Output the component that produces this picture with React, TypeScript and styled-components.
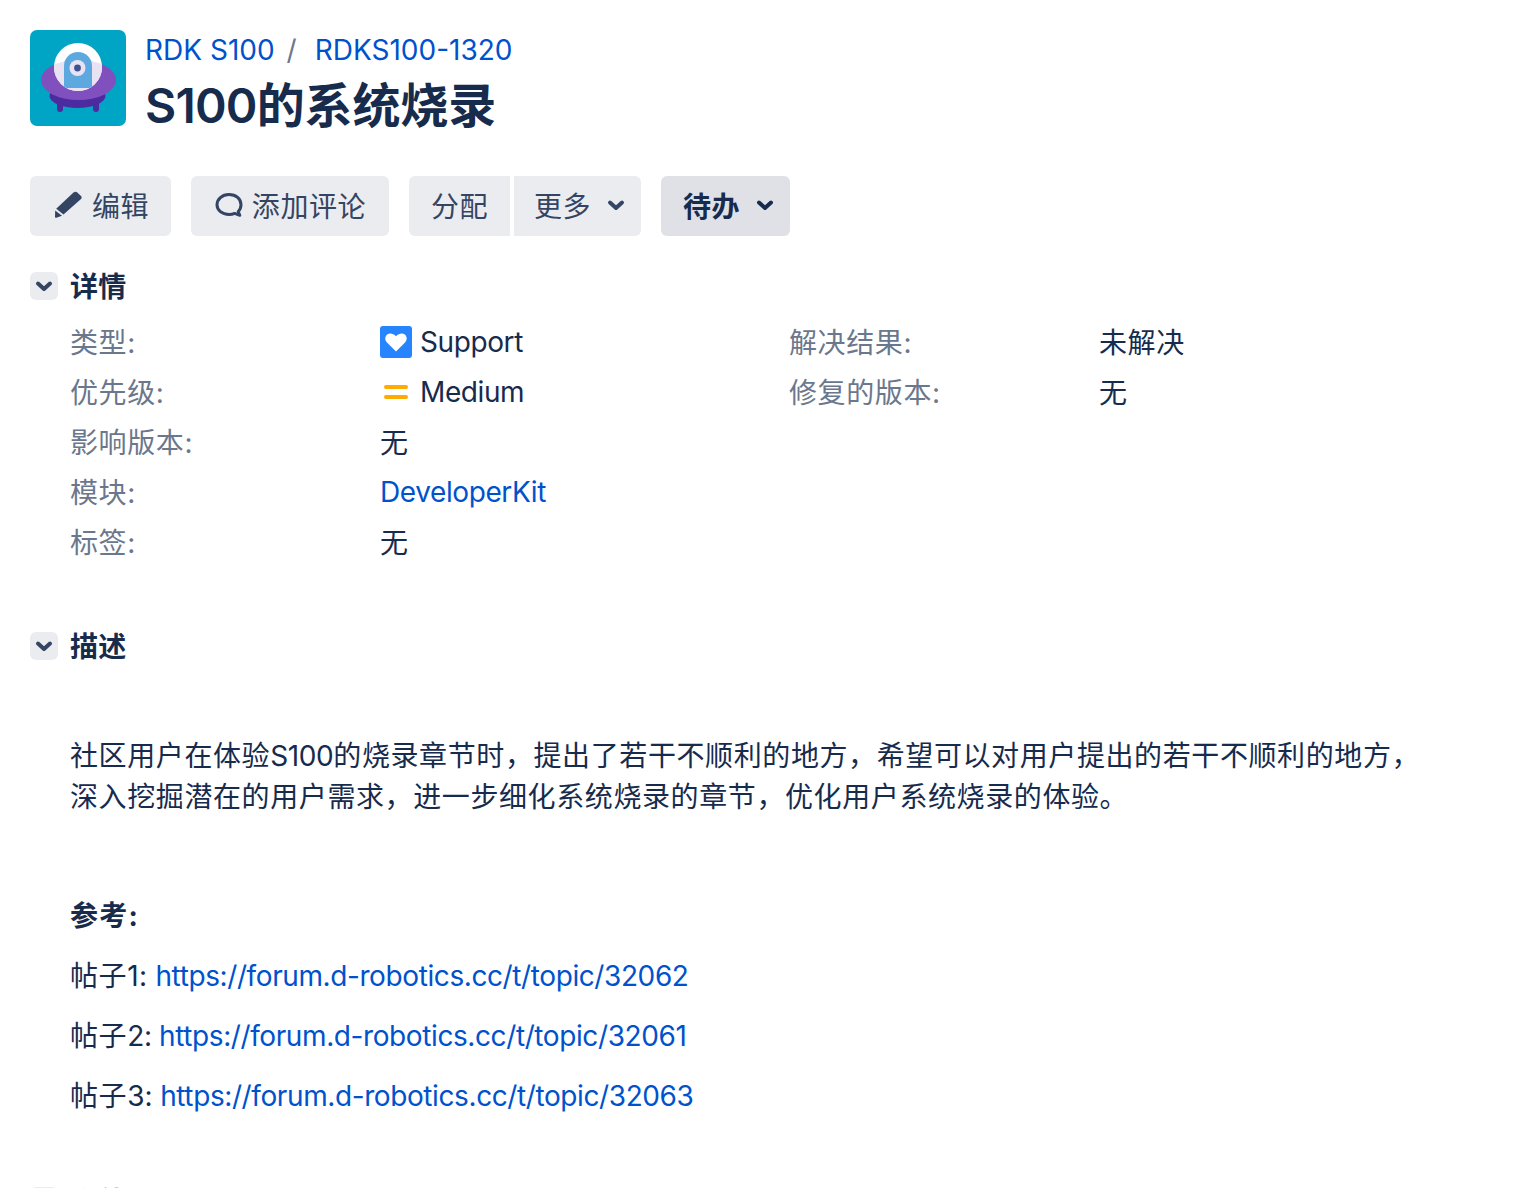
import React from 'react';
import styled, { createGlobalStyle } from 'styled-components';

const Global = createGlobalStyle`
  html, body { margin: 0; padding: 0; background: #fff; height: 1188px; overflow: hidden; }
  body { font-family: Inter, "Noto Sans CJK SC", sans-serif; color: #172b4d; font-size: 28px; letter-spacing: 0.6px; }
  a { color: #0052cc; text-decoration: none; letter-spacing: -0.4px; }
`;

const Lat = styled.span`
  letter-spacing: -0.4px;
`;
const PostNum = styled.span<{ $ls: number }>`
  letter-spacing: ${p => p.$ls}px;
`;
const Page = styled.div`
  display: flex;
  flex-direction: column;
  padding: 30px 30px 0;
`;
const Header = styled.header`
  display: flex;
  gap: 19px;
  height: 96px;
`;
const Avatar = styled.svg`
  width: 96px;
  height: 96px;
  flex: none;
  display: block;
`;
const HeadText = styled.div`
  display: flex;
  flex-direction: column;
`;
const Crumbs = styled.div`
  display: flex;
  align-items: center;
  height: 40px;
  line-height: 40px;
  white-space: nowrap;
  a { letter-spacing: 0; }
`;
const Slash = styled.span`
  color: #6b778c;
  margin: 0 18px 0 12px;
  letter-spacing: 0;
`;
const Title = styled.h1`
  margin: 8px 0 0;
  font-size: 48px;
  line-height: 56px;
  font-weight: 600;
  color: #172b4d;
  white-space: nowrap;
  letter-spacing: -0.1px;
`;
const TitleLat = styled.span`
  letter-spacing: -0.8px;
`;
const Toolbar = styled.div`
  display: flex;
  margin-top: 50px;
  height: 60px;
`;
const Button = styled.div<{ $w: number; $ml?: number; $side?: 'l' | 'r'; $status?: boolean; $pad?: number; $gap?: number }>`
  display: flex;
  align-items: center;
  justify-content: ${p => (p.$pad ? 'flex-start' : 'center')};
  padding-left: ${p => p.$pad ?? 0}px;
  padding-bottom: 2px;
  box-sizing: border-box;
  gap: ${p => p.$gap ?? 13}px;
  width: ${p => p.$w}px;
  margin-left: ${p => p.$ml ?? 0}px;
  background: ${p => (p.$status ? '#dfe1e6' : '#ebecf0')};
  color: ${p => (p.$status ? '#172b4d' : '#344563')};
  font-weight: ${p => (p.$status ? 600 : 400)};
  border-radius: ${p => (p.$side === 'l' ? '6px 0 0 6px' : p.$side === 'r' ? '0 6px 6px 0' : '6px')};
`;
const Section = styled.section<{ $top: number }>`
  margin-top: ${p => p.$top}px;
`;
const SectionHead = styled.div`
  display: flex;
  align-items: center;
  gap: 12px;
  height: 28px;
`;
const Toggle = styled.span`
  width: 28px;
  height: 28px;
  border-radius: 6px;
  background: #ebecf0;
  color: #344563;
  display: flex;
  align-items: center;
  justify-content: center;
`;
const SectionTitle = styled.h2`
  margin: 2px 0 0;
  font-size: 28px;
  line-height: 28px;
  font-weight: 700;
  letter-spacing: 0.2px;
`;
const Details = styled.div`
  display: grid;
  grid-template-columns: 310px 409px 310px 1fr;
  grid-auto-rows: 50px;
  align-items: center;
  margin: 17px 0 0 40px;
`;
const Label = styled.div`
  color: #6b778c;
  padding-bottom: 2px;
`;
const Value = styled.div`
  display: flex;
  align-items: center;
  gap: 8px;
`;
const PlainValue = styled.div`
  padding-bottom: 2px;
`;
const Body = styled.div`
  margin: 76px 0 0 40px;
  width: 1360px;
`;
const Para = styled.p`
  margin: 0;
  line-height: 41px;
`;
const RefHead = styled.p`
  margin: 78px 0 0;
  line-height: 40px;
  font-weight: 700;
  letter-spacing: 1.2px;
`;
const RefLine = styled.p`
  margin: 20px 0 0;
  line-height: 40px;
`;
const Caret = () => (
  <svg width={24} height={24} viewBox="0 0 24 24" fill="none">
    <path d="M6 9.500l6 5.500 6-5.500" stroke="currentColor" strokeWidth="4" strokeLinecap="round" strokeLinejoin="round" />
  </svg>
);

export default function App() {
  return (
    <>
      <Global />
      <Page>
        <Header>
          <Avatar viewBox="0 0 96 96">
            <defs>
              <clipPath id="saucer"><ellipse cx="48.500" cy="50" rx="37.500" ry="20" /></clipPath>
              <clipPath id="dome"><circle cx="48" cy="37" r="24" /></clipPath>
            </defs>
            <rect width="96" height="96" rx="7" fill="#00a4c4" />
            <rect x="27" y="66" width="6" height="16" rx="3" fill="#4c2aa0" />
            <rect x="63" y="66" width="6" height="16" rx="3" fill="#4c2aa0" />
            <ellipse cx="47.500" cy="66" rx="28" ry="12" fill="#4c2aa0" />
            <ellipse cx="48.500" cy="50" rx="37.500" ry="20" fill="#8050be" />
            <circle cx="48" cy="37" r="24" fill="#fff" />
            <g clipPath="url(#saucer)"><circle cx="48" cy="37" r="24" fill="#e9e2f3" /></g>
            <g clipPath="url(#dome)"><path d="M34 36a14 14 0 0 1 28 0v22h-28z" fill="#5ea8e0" /></g>
            <circle cx="47.500" cy="38" r="8" fill="#e9e2f3" />
            <circle cx="47.500" cy="38" r="3.400" fill="#3d5290" />
          </Avatar>
          <HeadText>
            <Crumbs>
              <a>RDK S100</a>
              <Slash>/</Slash>
              <a>RDKS100-1320</a>
            </Crumbs>
            <Title><TitleLat>S100</TitleLat>的系统烧录</Title>
          </HeadText>
        </Header>
        <Toolbar>
          <Button $w={141} $gap={10} $pad={24}>
            <svg width="28" height="28" viewBox="0 0 28 28">
              <path d="M19.500 1.500Q21.500 0 23 1.200L27 5Q28.300 6.500 27 8L9.500 23.500 2.200 17.800z" fill="#344563" />
              <path d="M1.200 19.500 8 24.800 2.300 26.800Q.6 27 1 25.500z" fill="#344563" />
            </svg>
            <span>编辑</span>
          </Button>
          <Button $w={198} $ml={20} $gap={8}>
            <svg width="30" height="30" viewBox="0 0 30 30" fill="none">
              <path d="M15 4.500c7 0 12 4.400 12 10.300 0 2.800-1 5-2.800 6.700l1.600 3.800-5.200-1.900c-1.700.8-3.500 1.100-5.600 1.100-7 0-12-4.200-12-9.700S8 4.500 15 4.500z" stroke="#344563" strokeWidth="3" strokeLinejoin="round" />
            </svg>
            <span>添加评论</span>
          </Button>
          <Button $w={101} $ml={20} $side="l">分配</Button>
          <Button $w={127} $ml={4} $side="r" $pad={20}>
            <span>更多</span>
            <Caret />
          </Button>
          <Button $w={129} $ml={20} $status $pad={22}>
            <span>待办</span>
            <Caret />
          </Button>
        </Toolbar>
        <Section $top={36}>
          <SectionHead>
            <Toggle><Caret /></Toggle>
            <SectionTitle>详情</SectionTitle>
          </SectionHead>
          <Details>
            <Label>类型:</Label>
            <Value>
              <svg width="32" height="32" viewBox="0 0 32 32">
                <rect width="32" height="32" rx="3" fill="#2684ff" />
                <path d="M16 25.500 7 16.500c-2.400-2.500-2.200-6 .2-8 2.500-1.900 5.900-1.300 8.800 1.800 2.900-3.100 6.300-3.700 8.800-1.800 2.400 2 2.600 5.500.2 8z" fill="#fff" />
              </svg>
              <Lat>Support</Lat>
            </Value>
            <Label>解决结果:</Label>
            <PlainValue>未解决</PlainValue>
            <Label>优先级:</Label>
            <Value>
              <svg width="32" height="32" viewBox="0 0 32 32">
                <rect x="4" y="9" width="24" height="4" rx="2" fill="#ffab00" />
                <rect x="4" y="19" width="24" height="4" rx="2" fill="#ffab00" />
              </svg>
              <Lat>Medium</Lat>
            </Value>
            <Label>修复的版本:</Label>
            <PlainValue>无</PlainValue>
            <Label>影响版本:</Label>
            <PlainValue>无</PlainValue>
            <span />
            <span />
            <Label>模块:</Label>
            <Value><a>DeveloperKit</a></Value>
            <span />
            <span />
            <Label>标签:</Label>
            <PlainValue>无</PlainValue>
          </Details>
        </Section>
        <Section $top={65}>
          <SectionHead>
            <Toggle><Caret /></Toggle>
            <SectionTitle>描述</SectionTitle>
          </SectionHead>
          <Body>
            <Para>社区用户在体验<Lat>S100</Lat>的烧录章节时，提出了若干不顺利的地方，希望可以对用户提出的若干不顺利的地方，深入挖掘潜在的用户需求，进一步细化系统烧录的章节，优化用户系统烧录的体验。</Para>
            <RefHead>参考:</RefHead>
            <RefLine>帖子<PostNum $ls={0.3}>1: </PostNum><a>https://forum.d-robotics.cc/t/topic/32062</a></RefLine>
            <RefLine>帖子<PostNum $ls={-0.4}>2: </PostNum><a>https://forum.d-robotics.cc/t/topic/32061</a></RefLine>
            <RefLine>帖子<PostNum $ls={-0.1}>3: </PostNum><a>https://forum.d-robotics.cc/t/topic/32063</a></RefLine>
          </Body>
        </Section>
        <Section $top={71}>
          <SectionHead>
            <Toggle><Caret /></Toggle>
            <SectionTitle>附件</SectionTitle>
          </SectionHead>
        </Section>
      </Page>
    </>
  );
}
